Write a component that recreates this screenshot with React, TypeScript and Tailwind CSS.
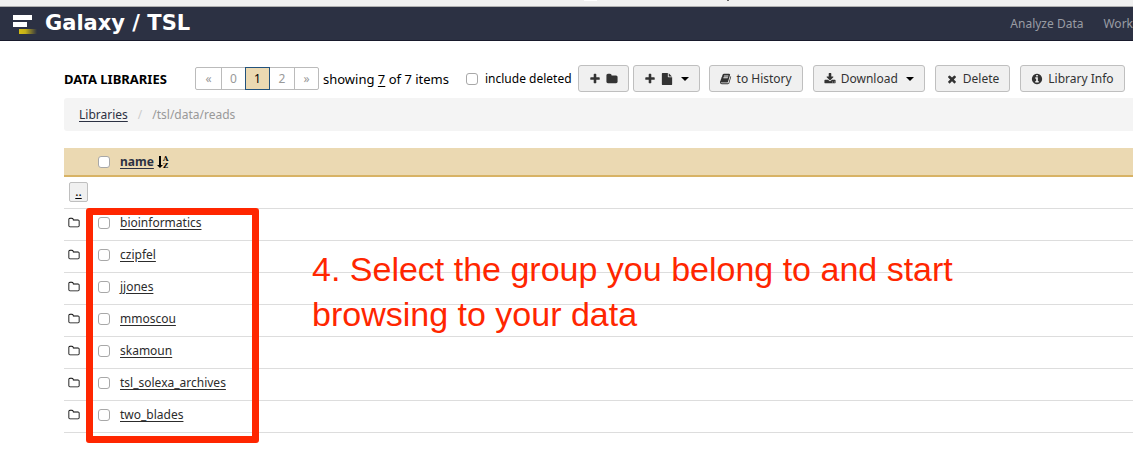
import type { ReactNode } from 'react'

const paths = {
  plus: 'M1600 736v192q0 40-28 68t-68 28h-416v416q0 40-28 68t-68 28h-192q-40 0-68-28t-28-68v-416h-416q-40 0-68-28t-28-68v-192q0-40 28-68t68-28h416v-416q0-40 28-68t68-28h192q40 0 68 28t28 68v416h416q40 0 68 28t28 68z',
  folder: 'M1728 608v704q0 92-66 158t-158 66h-1216q-92 0-158-66t-66-158v-960q0-92 66-158t158-66h320q92 0 158 66t66 158v32h672q92 0 158 66t66 158z',
  folderOpen: 'M1600 1312v-704q0-40-28-68t-68-28h-704q-40 0-68-28t-28-68v-64q0-40-28-68t-68-28h-320q-40 0-68 28t-28 68v960q0 40 28 68t68 28h1216q40 0 68-28t28-68zm128-704v704q0 92-66 158t-158 66h-1216q-92 0-158-66t-66-158v-960q0-92 66-158t158-66h320q92 0 158 66t66 158v32h672q92 0 158 66t66 158z',
  file: 'M1152 512v-472q22 14 36 28l408 408q14 14 28 36h-472zm-128 32q0 40 28 68t68 28h544v1056q0 40-28 68t-68 28h-1344q-40 0-68-28t-28-68v-1600q0-40 28-68t68-28h800v544z',
  book: 'M1639 478q40 57 18 129l-275 906q-19 64-76.5 107.5t-122.5 43.5h-923q-77 0-148.500-53.500t-99.500-131.500q-24-67-2-127 0-4 3-27t4-37q1-8-3-21.500t-3-19.500q2-11 8-21t16.500-23.500 16.500-23.500q23-38 45-91.500t30-91.500q3-10 .5-30t-.5-28q3-11 17-28t17-23q21-36 42-92t25-90q1-9-2.500-32t.5-28q4-13 22-30.500t22-22.500q19-26 42.500-84.500t27.500-96.500q1-8-3-25.500t-2-26.500q2-8 9-18t18-23 17-21q8-12 16.500-30.500t15-35 16-36 19.500-32 26.500-23.500 36-11.500 47.500 5.500l-1 3q38-9 51-9h761q74 0 114 56t18 130l-274 906q-36 119-71.500 153.500t-128.500 34.500h-869q-27 0-38 15-11 16-1 43 24 70 144 70h923q29 0 56-15.500t35-41.500l300-987q7-22 5-57 38 15 59 43zm-1064 2q-4 13 2 22.500t20 9.500h608q13 0 25.500-9.500t16.500-22.500l21-64q4-13-2-22.500t-20-9.500h-608q-13 0-25.500 9.500t-16.500 22.500zm-83 256q-4 13 2 22.500t20 9.500h608q13 0 25.500-9.500t16.500-22.500l21-64q4-13-2-22.500t-20-9.500h-608q-13 0-25.500 9.500t-16.500 22.500z',
  download: 'M1344 1344q0-26-19-45t-45-19-45 19-19 45 19 45 45 19 45-19 19-45zm256 0q0-26-19-45t-45-19-45 19-19 45 19 45 45 19 45-19 19-45zm128-224v320q0 40-28 68t-68 28h-1472q-40 0-68-28t-28-68v-320q0-40 28-68t68-28h465l135 136q58 56 136 56t136-56l136-136h464q40 0 68 28t28 68zm-325-569q17 41-14 70l-448 448q-18 19-45 19t-45-19l-448-448q-31-29-14-70 17-39 59-39h256v-448q0-26 19-45t45-19h256q26 0 45 19t19 45v448h256q42 0 59 39z',
  times: 'M1490 1322q0 40-28 68l-136 136q-28 28-68 28t-68-28l-294-294-294 294q-28 28-68 28t-68-28l-136-136q-28-28-28-68t28-68l294-294-294-294q-28-28-28-68t28-68l136-136q28-28 68-28t68 28l294 294 294-294q28-28 68-28t68 28l136 136q28 28 28 68t-28 68l-294 294 294 294q28 28 28 68z',
  info: 'M1152 1376v-160q0-14-9-23t-23-9h-96v-512q0-14-9-23t-23-9h-320q-14 0-23 9t-9 23v160q0 14 9 23t23 9h96v320h-96q-14 0-23 9t-9 23v160q0 14 9 23t23 9h448q14 0 23-9t9-23zm-128-896v-160q0-14-9-23t-23-9h-192q-14 0-23 9t-9 23v160q0 14 9 23t23 9h192q14 0 23-9t9-23zm640 416q0 209-103 385.500t-279.500 279.500-385.500 103-385.500-103-279.500-279.500-103-385.500 103-385.500 279.500-279.500 385.500-103 385.500 103 279.500 279.500 103 385.500z',
}

function Icon({ name }: { name: keyof typeof paths }) {
  return (
    <svg viewBox="0 0 1792 1792" className="size-3 shrink-0 fill-current" aria-hidden="true">
      <path d={paths[name]} />
    </svg>
  )
}

function Caret() {
  return (
    <svg viewBox="0 0 8 4" className="ml-[3px] h-1 w-2 shrink-0 fill-black" aria-hidden="true">
      <path d="M0 0h8L4 4z" />
    </svg>
  )
}

function SortIcon() {
  return (
    <svg viewBox="0 0 13 14" className="h-[14px] w-[13px] fill-black" aria-hidden="true">
      <path d="M2 1h2v9h2L3 13 0 10h2z" />
      <text x="6" y="6" fontSize="7" fontWeight="bold" fontFamily="DejaVu Serif, serif">
        A
      </text>
      <text x="6" y="13" fontSize="7" fontWeight="bold" fontFamily="DejaVu Serif, serif">
        Z
      </text>
    </svg>
  )
}

function ToolButton({ children, label }: { children: ReactNode; label?: string }) {
  return (
    <button
      type="button"
      aria-label={label}
      className="flex h-[27px] shrink-0 items-center gap-[5px] rounded-[3px] border border-[#bfbfbf] bg-[#f0f0f0] px-[10px] whitespace-nowrap text-[#333]"
    >
      {children}
    </button>
  )
}

function Check({ id, label }: { id?: string; label?: string }) {
  return (
    <input
      type="checkbox"
      id={id}
      aria-label={label}
      className="block size-3 shrink-0 appearance-none rounded-[3px] border border-[#a8a8a8] bg-white"
    />
  )
}

const pages = ['«', '0', '1', '2', '»']
const folders = ['bioinformatics', 'czipfel', 'jjones', 'mmoscou', 'skamoun', 'tsl_solexa_archives', 'two_blades']

export default function App() {
  return (
    <div className="overflow-hidden bg-white pb-5 font-['Noto_Sans',sans-serif] text-[12px] leading-4 text-black">
      <div className="flex h-[7px] border-b border-[#b0b0b0] bg-[#f0f0f0] pl-[584px]">
        <span className="h-px w-[13px] bg-white" />
        <span className="ml-[130px] h-px w-[2px] bg-[#666]" />
      </div>
      <header className="flex h-[34px] items-center justify-between border-b border-[#181a2c] bg-[#2c3143] pl-3">
        <a href="#home" className="flex items-center gap-2 text-white">
          <svg viewBox="0 0 25 22" className="h-[22px] w-[25px]" aria-hidden="true">
            <defs>
              <linearGradient id="logo-bar">
                <stop offset="0" stopColor="#d5bd13" />
                <stop offset=".35" stopColor="#c5b018" />
                <stop offset="1" stopColor="#2c3143" />
              </linearGradient>
            </defs>
            <path d="M1 2h19v5H1zM1 9h14v5H1z" fill="#fff" />
            <path d="M7 16h18v5H7z" fill="url(#logo-bar)" />
          </svg>
          <span className="pb-[2px] font-['DejaVu_Sans',sans-serif] text-[21px] leading-6 font-bold">Galaxy / TSL</span>
        </a>
        <nav className="flex gap-5 text-[#999ca3]">
          <a href="#analyze">Analyze Data</a>
          <a href="#work">Work</a>
        </nav>
      </header>

      <main className="pl-16">
        <div className="flex h-[57px] items-end pb-[6px]">
          <div className="flex h-[27px] w-full items-center">
            <h1 className="w-[131px] shrink-0 text-[13px] font-bold">DATA LIBRARIES</h1>
            <nav className="flex h-[23px] shrink-0 rounded-[2px] border border-[#bbb]" aria-label="Pages">
              {pages.map((page) => (
                <a
                  key={page}
                  href="#page"
                  className={
                    page === '1'
                      ? '-my-px flex w-[25px] items-center justify-center border border-[#23527c] bg-[#ebd9b2] text-black'
                      : 'flex w-6 items-center justify-center border-l border-[#bbb] text-[#999] first:w-[25px] first:border-l-0 nth-4:border-l-0'
                  }
                >
                  {page}
                </a>
              ))}
            </nav>
            <p className="ml-1 w-[123px] shrink-0 text-[13px] whitespace-nowrap">
              showing <span className="underline underline-offset-2">7</span> of 7 items
            </p>
            <div className="ml-5 flex shrink-0 items-center gap-[7px]">
              <Check id="deleted" />
              <label htmlFor="deleted">include deleted</label>
            </div>
            <div className="ml-[6px] flex gap-1">
              <ToolButton label="Create folder">
                <Icon name="plus" />
                <Icon name="folder" />
              </ToolButton>
              <ToolButton label="Add datasets">
                <Icon name="plus" />
                <Icon name="file" />
                <Caret />
              </ToolButton>
            </div>
            <div className="ml-[9px] flex gap-[10px]">
              <ToolButton>
                <Icon name="book" /> to History
              </ToolButton>
              <ToolButton>
                <Icon name="download" /> Download <Caret />
              </ToolButton>
              <ToolButton>
                <Icon name="times" /> Delete
              </ToolButton>
              <ToolButton>
                <Icon name="info" /> Library Info
              </ToolButton>
            </div>
          </div>
        </div>

        <nav className="flex h-[33px] items-center rounded-l-[3px] bg-[#f4f4f4] pl-[15px] text-[#999]" aria-label="Breadcrumb">
          <a href="#libraries" className="text-[#2c3143] underline underline-offset-2">
            Libraries
          </a>
          <span className="px-[10px] text-[#ccc]">/</span>
          <span>/tsl/data/reads</span>
        </nav>

        <div className="relative mt-[17px]">
          <table className="w-full table-fixed border-collapse text-left">
            <colgroup>
              <col className="w-[34px]" />
              <col className="w-[22px]" />
              <col />
            </colgroup>
            <thead>
              <tr className="h-7 border-b-2 border-[#d8b365] bg-[#ebd9b2]">
                <th aria-label="Type" />
                <th>
                  <Check label="Select all" />
                </th>
                <th>
                  <span className="flex items-center gap-[3px] text-[#2c3143]">
                    <a href="#sort" className="font-bold underline underline-offset-2">
                      name
                    </a>
                    <SortIcon />
                  </span>
                </th>
              </tr>
            </thead>
            <tbody>
              <tr className="h-8 border-b border-[#ddd]">
                <td colSpan={3} className="pl-[5px]">
                  <button
                    type="button"
                    className="flex h-5 w-[19px] items-center justify-center rounded-[2px] border border-[#bfbfbf] bg-[#f0f0f0] underline underline-offset-2"
                  >
                    ..
                  </button>
                </td>
              </tr>
              {folders.map((folder) => (
                <tr key={folder} className="h-8 border-b border-[#ddd]">
                  <td className="pb-[2px] pl-1">
                    <Icon name="folderOpen" />
                  </td>
                  <td className="pb-[2px]">
                    <Check label={'Select ' + folder} />
                  </td>
                  <td className="pb-[2px]">
                    <a href="#folder" className="text-[#2c2c2c] underline underline-offset-2">
                      {folder}
                    </a>
                  </td>
                </tr>
              ))}
            </tbody>
          </table>
          <div className="pointer-events-none absolute top-[60px] left-[22px] h-[235px] w-[173px] rounded-[3px] border-[7px] border-[#ff2600]" />
          <p className="pointer-events-none absolute top-[99px] left-[248px] w-[660px] font-['Liberation_Sans',sans-serif] text-[34px] leading-[45px] text-[#ff2600]">
            4. Select the group you belong to and start browsing to your data
          </p>
        </div>
      </main>
    </div>
  )
}
